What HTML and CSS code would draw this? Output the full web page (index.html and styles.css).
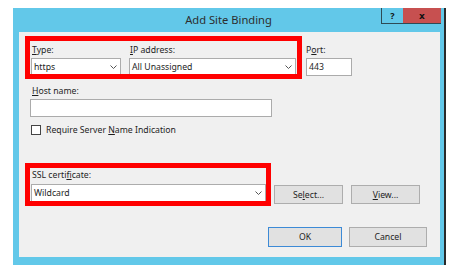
FILE: index.html
```html
<!DOCTYPE html>
<html>
<head>
<meta charset="utf-8">
<title>Add Site Binding</title>
<link rel="stylesheet" href="styles.css">
</head>
<body>
<div class="window">
  <div class="titlebar">
    <div class="title">Add Site Binding</div>
    <div class="caption">
      <span class="cap-btn help">?</span>
      <span class="cap-btn close">x</span>
    </div>
  </div>
  <div class="client">
    <div class="row1">
      <div class="hl hl1">
        <div class="field f-type">
          <div class="lbl"><u>T</u>ype:</div>
          <div class="select"><span>https</span><svg class="chev" width="7" height="4" viewBox="0 0 7 4"><polyline points="0.5,0.5 3.5,3.5 6.5,0.5" fill="none" stroke="#555" stroke-width="1"/></svg></div>
        </div>
        <div class="field f-ip">
          <div class="lbl"><u>I</u>P address:</div>
          <div class="select"><span>All Unassigned</span><svg class="chev" width="7" height="4" viewBox="0 0 7 4"><polyline points="0.5,0.5 3.5,3.5 6.5,0.5" fill="none" stroke="#555" stroke-width="1"/></svg></div>
        </div>
      </div>
      <div class="field f-port">
        <div class="lbl lbl-flush">P<u>o</u>rt:</div>
        <div class="input">443</div>
      </div>
    </div>
    <div class="field host">
      <div class="lbl lbl-host"><u>H</u>ost name:</div>
      <div class="input"></div>
    </div>
    <div class="check">
      <span class="box"></span>
      <span>Require Server <u>N</u>ame Indication</span>
    </div>
    <div class="row3">
      <div class="hl hl2">
        <div class="lbl lbl-ssl">SSL certi<u>f</u>icate:</div>
        <div class="select"><span>Wildcard</span><svg class="chev" width="7" height="4" viewBox="0 0 7 4"><polyline points="0.5,0.5 3.5,3.5 6.5,0.5" fill="none" stroke="#555" stroke-width="1"/></svg></div>
      </div>
      <div class="btn btn-select">Se<u>l</u>ect...</div>
      <div class="btn btn-view"><u>V</u>iew...</div>
    </div>
    <div class="actions">
      <div class="btn ok">OK</div>
      <div class="btn cancel">Cancel</div>
    </div>
  </div>
</div>
</body>
</html>
```
FILE: styles.css
```css
* { box-sizing: border-box; }

body {
  margin: 0;
  background: #ffffff;
  font-family: "Noto Sans", sans-serif;
  font-size: 8.7px;
  color: #1e1e1e;
}

.window {
  margin: 8px 0 0 13px;
  width: 433px;
  background: #62c8e9;
  border-right: 2px solid #2a2a2a;
  padding: 0 4px 8px 6px;
}

.titlebar {
  display: grid;
  grid-template-columns: 1fr auto 1fr;
  height: 24px;
  margin: 0 -4px 0 -6px;
}

.title {
  grid-column: 2;
  font-size: 11.2px;
  line-height: 24px;
  color: #2d2d2d;
}

.caption {
  grid-column: 3;
  justify-self: end;
  align-self: start;
  display: flex;
  margin-right: 3px;
}

.cap-btn {
  height: 16px;
  display: flex;
  align-items: center;
  justify-content: center;
  font-weight: bold;
  color: #111;
  border-bottom: 1px solid #2e4a55;
}

.help {
  width: 22px;
  border-left: 1px solid #2e4a55;
  font-size: 9px;
}

.close {
  width: 38px;
  background: #c75050;
  font-family: "DejaVu Sans", sans-serif;
  font-size: 9px;
}

.client {
  background: #f0f0f0;
  height: 225px;
  padding: 4px 0 0 6px;
}

.row1 {
  display: flex;
  align-items: flex-start;
}

.hl {
  border: 5px solid #ff0000;
  height: 43px;
  overflow: hidden;
  display: flex;
}

.hl1 {
  width: 277px;
  gap: 8px;
  padding: 3px 0 0 1px;
}

.lbl {
  line-height: 12px;
  height: 12px;
  margin-bottom: 2px;
  padding-left: 1px;
  white-space: nowrap;
}

.lbl-flush { padding-left: 0; }
.lbl-host { padding-left: 2px; }

.select {
  height: 18px;
  background: #ffffff;
  border: 1px solid #acacac;
  display: flex;
  align-items: center;
  padding: 0 3px 0 2px;
  line-height: 16px;
  white-space: nowrap;
}

.chev { margin-left: auto; flex: none; }

.f-type { width: 90px; }
.f-ip { width: 167px; }

.f-port {
  width: 46px;
  margin: 8px 0 0 4px;
}

.input {
  height: 18px;
  background: #ffffff;
  border: 1px solid #ababab;
  padding-left: 2px;
  line-height: 16px;
}

.host {
  width: 242px;
  margin: 6px 0 0 5px;
}

.check {
  display: flex;
  align-items: center;
  gap: 5px;
  height: 16px;
  margin: 5px 0 0 6px;
}

.box {
  width: 10px;
  height: 10px;
  background: #ffffff;
  border: 1px solid #444;
}

.row3 {
  display: flex;
  align-items: flex-start;
  margin-top: 25px;
}

.hl2 {
  width: 246px;
  flex-direction: column;
  padding: 1px 0 0 1px;
}

.lbl-ssl { margin-bottom: 3px; }

.btn {
  height: 19px;
  width: 69px;
  background: #e1e1e1;
  border: 1px solid #adadad;
  display: flex;
  align-items: center;
  justify-content: center;
}

.btn-select { margin: 22px 0 0 3px; }
.btn-view { margin: 22px 0 0 8px; }

.actions {
  display: flex;
  gap: 7px;
  margin: 21px 0 0 243px;
}

.ok {
  width: 74px;
  height: 20px;
  border-color: #3c8ad6;
}

.cancel {
  width: 78px;
  height: 20px;
}
```
